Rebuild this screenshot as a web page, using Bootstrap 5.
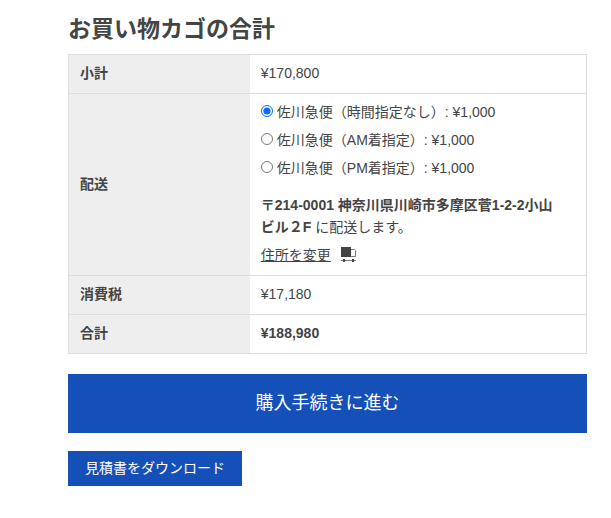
<!DOCTYPE html>
<html lang="ja">
<head>
<meta charset="utf-8">
<meta name="viewport" content="width=device-width, initial-scale=1">
<title>お買い物カゴの合計</title>
<link href="https://cdn.jsdelivr.net/npm/bootstrap@5.3.0/dist/css/bootstrap.min.css" rel="stylesheet">
<style>
  body { font-family: "Liberation Sans", "Noto Sans CJK JP", sans-serif; font-size: 14px; line-height: 22px; color: #444; }
  .cart-totals { padding: 12px 24px 32px 68px; }
  .cart-title { font-size: 23px; line-height: 34px; margin-bottom: 8px; }
  .totals-table { --bs-table-color: #444; border: 1px solid #ddd; margin-bottom: 20px; }
  .totals-table th, .totals-table td { padding: 7px 11px 9px; border-bottom: 1px solid #ddd; vertical-align: middle; }
  .totals-table th { width: 35%; background: #eee; }
  .shipping-list { gap: 6px; }
  .shipping-list input { width: 12px; height: 12px; margin: 0 4px 4px 0; vertical-align: middle; accent-color: #0b6bff; }
  .destination { margin: 15px 0 6px; }
  .change-address { color: #444; }
  .truck { width: 15px; height: 15px; margin-left: 10px; vertical-align: -2px; }
  .btn-shop { --bs-btn-color: #fff; --bs-btn-bg: #1450b8; --bs-btn-border-color: #1450b8; --bs-btn-hover-color: #fff; --bs-btn-hover-bg: #10439b; --bs-btn-hover-border-color: #10439b; }
  .btn-checkout { --bs-btn-font-size: 18px; line-height: 27px; padding: 15px; margin-bottom: 18px; }
  .btn-quote { --bs-btn-font-size: 14px; line-height: 21px; padding: 6px 16px; }
</style>
</head>
<body>
<main class="cart-totals">
  <h2 class="cart-title fw-bold">お買い物カゴの合計</h2>
  <table class="table totals-table">
    <tbody>
      <tr><th scope="row">小計</th><td>¥170,800</td></tr>
      <tr>
        <th scope="row">配送</th>
        <td>
          <ul class="shipping-list list-unstyled d-flex flex-column mb-0">
            <li><input type="radio" name="shipping" id="ship-any" checked><label for="ship-any">佐川急便（時間指定なし）: ¥1,000</label></li>
            <li><input type="radio" name="shipping" id="ship-am"><label for="ship-am">佐川急便（AM着指定）: ¥1,000</label></li>
            <li><input type="radio" name="shipping" id="ship-pm"><label for="ship-pm">佐川急便（PM着指定）: ¥1,000</label></li>
          </ul>
          <p class="destination"><strong>〒214-0001 神奈川県川崎市多摩区菅1-2-2小山<br>ビル２F</strong> に配送します。</p>
          <a class="change-address" href="#">住所を変更</a><svg class="truck" viewBox="0 0 15 15" aria-hidden="true">
            <path fill="#444" d="M0 0h10v10H0z"/>
            <path fill="none" stroke="#777" d="M10 2.500h3.500l1 1v6H10"/>
            <path fill="#777" d="M0 13h15v1H0z"/>
            <path fill="#444" d="M2 12h2v3H2zM11 12h2v3h-2z"/>
          </svg>
        </td>
      </tr>
      <tr><th scope="row">消費税</th><td>¥17,180</td></tr>
      <tr><th scope="row">合計</th><td><strong>¥188,980</strong></td></tr>
    </tbody>
  </table>
  <a class="btn btn-shop btn-checkout d-block rounded-0" href="#">購入手続きに進む</a>
  <a class="btn btn-shop btn-quote rounded-0" href="#">見積書をダウンロード</a>
</main>
<script src="https://cdn.jsdelivr.net/npm/bootstrap@5.3.0/dist/js/bootstrap.bundle.min.js"></script>
</body>
</html>
